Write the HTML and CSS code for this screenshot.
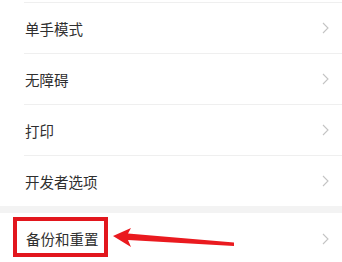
FILE: index.html
```html
<!DOCTYPE html>
<html lang="zh-CN">
<head>
<meta charset="utf-8">
<link rel="stylesheet" href="styles.css">
</head>
<body>
<div class="group">
  <div class="row"><span class="label">单手模式</span><svg class="chev" viewBox="0 0 7 12" width="7" height="12"><polyline points="1,1 6,6 1,11"/></svg></div>
  <div class="row"><span class="label">无障碍</span><svg class="chev" viewBox="0 0 7 12" width="7" height="12"><polyline points="1,1 6,6 1,11"/></svg></div>
  <div class="row"><span class="label">打印</span><svg class="chev" viewBox="0 0 7 12" width="7" height="12"><polyline points="1,1 6,6 1,11"/></svg></div>
  <div class="row"><span class="label">开发者选项</span><svg class="chev" viewBox="0 0 7 12" width="7" height="12"><polyline points="1,1 6,6 1,11"/></svg></div>
</div>
<div class="band"></div>
<div class="group last">
  <div class="row plain"><span class="label">备份和重置</span><svg class="chev" viewBox="0 0 7 12" width="7" height="12"><polyline points="1,1 6,6 1,11"/></svg></div>
  <div class="highlight"></div>
  <svg class="arrow" viewBox="0 0 342 50" width="342" height="50"><polygon points="113,23 131,15 128,20.5 234,29.5 234,33 128,27 131,34"/></svg>
</div>
</body>
</html>
```
FILE: styles.css
```css
html, body {
  margin: 0;
  padding: 0;
  background: #ffffff;
  font-family: "Noto Sans CJK SC", "Noto Sans", sans-serif;
}
.group {
  padding-top: 2px;
  background: #ffffff;
}
.row {
  margin-left: 24px;
  height: 50px;
  border-top: 1px solid #efefef;
  display: flex;
  align-items: center;
  justify-content: space-between;
  padding-left: 1px;
  padding-right: 13px;
}
.label {
  font-size: 14.5px;
  color: #2f2f2f;
  letter-spacing: 0;
}
.chev polyline {
  fill: none;
  stroke: #c4c4c4;
  stroke-width: 1.1;
}
.band {
  height: 7px;
  background: #f3f3f3;
}
.group.last {
  position: relative;
  padding-top: 0;
}
.row.plain {
  border-top: none;
  height: 51px;
  padding-left: 2px;
}
.highlight {
  position: absolute;
  left: 13px;
  top: 4px;
  width: 95px;
  height: 40px;
  box-sizing: border-box;
  border: 4px solid #e2161d;
}
.arrow {
  position: absolute;
  left: 0;
  top: 0;
}
.arrow polygon {
  fill: #ea1a1f;
}
```
